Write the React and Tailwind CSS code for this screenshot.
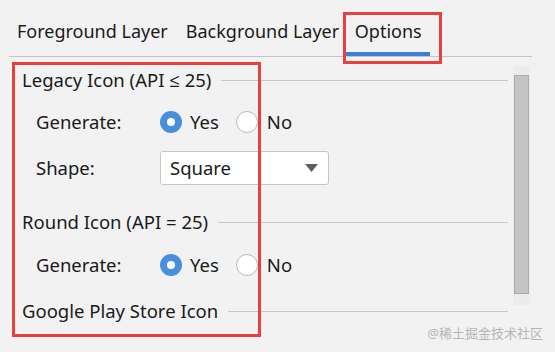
import React from "react";

const font = { fontFamily: '"Noto Sans", "Open Sans", sans-serif' };

function Radio({ checked }) {
  return checked ? (
    <span className="flex h-[22px] w-[22px] items-center justify-center rounded-full bg-[#4a8fdc]">
      <span className="h-[8px] w-[8px] rounded-full bg-white" />
    </span>
  ) : (
    <span className="h-[22px] w-[22px] rounded-full border border-[#b9b9b9] bg-white" />
  );
}

function RadioGroup() {
  return (
    <div className="flex items-center">
      <Radio checked />
      <span className="ml-[8px] mr-[17px]">Yes</span>
      <Radio />
      <span className="ml-[9px]">No</span>
    </div>
  );
}

function Header({ children, className = "" }) {
  return (
    <div className={"flex h-[30px] items-center " + className}>
      <span className="whitespace-nowrap">{children}</span>
      <span className="ml-[10px] h-px flex-1 bg-[#c9c9c9]" />
    </div>
  );
}

function Row({ label, children, className = "" }) {
  return (
    <div className={"flex items-center pl-[14px] " + className}>
      <span className="w-[124px]">{label}</span>
      {children}
    </div>
  );
}

export default function App() {
  return (
    <div
      className="relative h-[352px] w-[555px] overflow-hidden bg-[#f2f2f2] text-[18.5px] text-[#1a1a1a]"
      style={font}
    >
      {/* tabs */}
      <div className="flex h-[57px] items-end px-[9px] text-[18px]">
        <div className="mr-[14px] flex w-full border-b border-[#c4c4c4]">
          <div className="flex h-[50px] items-center whitespace-nowrap pl-[8px] pr-[18px]">Foreground Layer</div>
          <div className="flex h-[50px] w-[160px] items-center whitespace-nowrap">Background Layer</div>
          <div className="relative flex h-[50px] w-[84px] items-center pl-[9px]">
            Options
            <span className="absolute bottom-0 left-0 right-0 h-[4px] bg-[#3f7fd3]" />
          </div>
        </div>
      </div>

      {/* content */}
      <div className="flex">
        <div className="ml-[22px] w-[486px] pt-[8px]">
          <Header>Legacy Icon (API ≤ 25)</Header>
          <Row label="Generate:" className="mt-[12px] h-[30px]">
            <RadioGroup />
          </Row>
          <Row label="Shape:" className="mt-[14px] h-[34px]">
            <div className="flex h-[34px] w-[169px] items-center justify-between rounded-[3px] border border-[#c6c6c6] bg-white pl-[9px] pr-[10px]">
              <span>Square</span>
              <svg width="13" height="8" viewBox="0 0 13 8">
                <path d="M0 0 L13 0 L6.5 8 Z" fill="#5e5e5e" />
              </svg>
            </div>
          </Row>
          <Header className="mt-[22px]">Round Icon (API = 25)</Header>
          <Row label="Generate:" className="mt-[13px] h-[30px]">
            <RadioGroup />
          </Row>
          <Header className="mt-[16px]">Google Play Store Icon</Header>
        </div>
        {/* scrollbar */}
        <div className="ml-[5px] mt-[9px] flex h-[239px] w-[17px] flex-col bg-[#ececec]">
          <div className="mx-px mt-[9px] h-[219px] border border-[#ababab] bg-[#c4c4c4]" />
        </div>
      </div>

      {/* annotation boxes */}
      <div className="pointer-events-none absolute left-[343px] top-[12px] h-[52px] w-[99px] border-[3px] border-[#e8403f]" />
      <div className="pointer-events-none absolute left-[12px] top-[62px] h-[275px] w-[249px] border-[3px] border-[#e8403f]" />

      {/* watermark */}
      <div
        className="absolute bottom-[9px] right-[12px] text-[13px] text-[#b5b5b5]"
        style={{ fontFamily: '"Noto Sans", "Noto Sans CJK SC", sans-serif' }}
      >
        @稀土掘金技术社区
      </div>
    </div>
  );
}
